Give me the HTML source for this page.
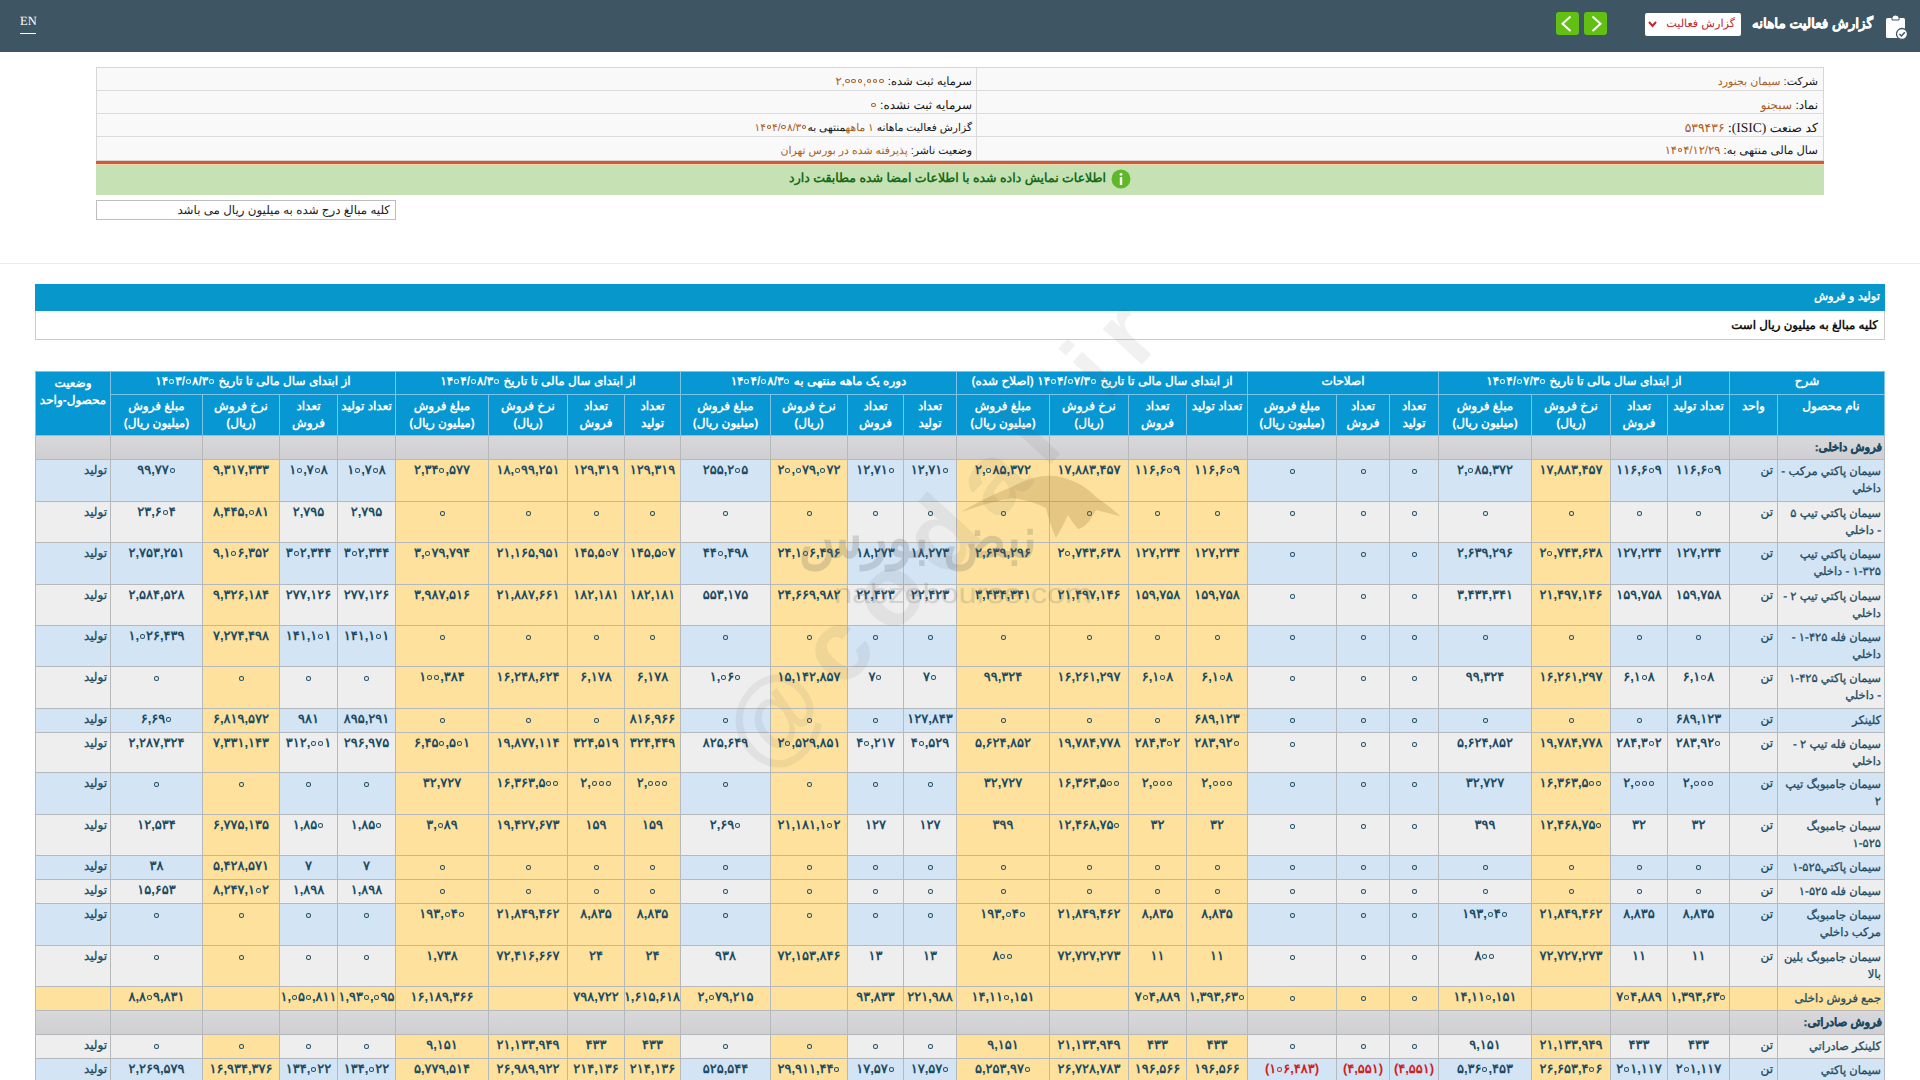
<!DOCTYPE html>
<html lang="fa" dir="ltr"><head><meta charset="utf-8"><title>Codal</title>
<style>
*{box-sizing:border-box}
html,body{text-rendering:geometricPrecision;margin:0;padding:0;width:1920px;height:1080px;overflow:hidden;background:#fff;font-family:"Liberation Sans",sans-serif;position:relative}
.a{position:absolute}
.hdr{position:absolute;left:0;top:0;width:1920px;height:52px;background:#3e5563}
.en{position:absolute;left:20px;top:13px;font-family:"Liberation Serif",serif;font-size:12.5px;color:#fff;line-height:16px}
.enu{position:absolute;left:20px;top:33px;width:16px;height:1px;background:#fff}
.ttl{position:absolute;right:47px;top:14px;font-size:13.6px;-webkit-text-stroke:.35px #fff;font-weight:bold;color:#fff;direction:rtl;white-space:nowrap;line-height:20px}
.dd{position:absolute;left:1645px;top:13px;width:96px;height:23px;background:#fff;border-radius:2px}
.ddt{position:absolute;right:6px;top:2px;font-size:11.2px;color:#c0272d;direction:rtl;white-space:nowrap;line-height:18px}
.gb{position:absolute;top:12px;width:23px;height:23px;background:#62c012;border-radius:3px}
.info{position:absolute;left:96px;top:67px;width:1728px;height:94px;background:#f9f9f9;border:1px solid #d6d6d6}
.il{position:absolute;height:1px;background:#dcdcdc}
.it{position:absolute;margin-top:2px;font-size:12px;color:#151515;direction:rtl;white-space:nowrap;line-height:16px}
.it i{font-style:normal;color:#a95c1c}
.redl{position:absolute;left:96px;top:161px;width:1728px;height:3px;background:#d4573a}
.orl{position:absolute;left:96px;top:164px;width:1728px;height:1px;background:#f1d9a8}
.grn{position:absolute;left:96px;top:165px;width:1728px;height:30px;background:#c6e2b5}
.gtx{position:absolute;right:814px;top:168.5px;font-size:12.5px;font-weight:bold;color:#176c17;direction:rtl;white-space:nowrap;line-height:18px}
.note{position:absolute;left:96px;top:200px;width:300px;height:20px;border:1px solid #bdbdbd;background:#fff}
.ntx{position:absolute;right:5px;top:1px;font-size:11.85px;color:#222;direction:rtl;white-space:nowrap;line-height:16px}
.sep{position:absolute;left:0;top:263px;width:1920px;height:1px;background:#ececec}
.sbar{position:absolute;left:35px;top:284px;width:1850px;height:27px;background:#0797cb}
.stx{position:absolute;right:40px;top:288px;font-size:11.6px;font-weight:bold;color:#fff;direction:rtl;white-space:nowrap;line-height:18px}
.sbox{position:absolute;left:35px;top:311px;width:1850px;height:29px;border:1px solid #cbcbcb;border-top:0;background:#fff}
.sbtx{position:absolute;right:42px;top:316px;font-size:11.8px;font-weight:bold;color:#111;direction:rtl;white-space:nowrap;line-height:18px}
.c{position:absolute;overflow:visible;white-space:nowrap;font-size:12px;line-height:17px;color:#1d4b62;text-align:center;direction:rtl}
.h{background:#0797d3;color:#fff;font-weight:bold;padding-top:3px}
.s{background:linear-gradient(#d9d9db,#cfcfd1)}
.bl{background:#d3e4f5}
.gr{background:#eeeeee}
.yl{background:#fde19c}
.n{padding-top:1px;font-weight:bold;font-size:13px;letter-spacing:.4px}
.z{display:inline-block;width:5px;height:4.6px;border:1.8px solid #1d4b62;border-radius:50%;vertical-align:top;margin-top:8px}
.h1{padding-top:1px}
.nm,.un,.st{-webkit-text-stroke:.3px currentColor}
.nm{text-align:right;padding-right:3px;padding-top:3.5px;font-size:11.5px;line-height:17.4px}
.un{text-align:right;padding-right:4px;padding-top:2px}
.st{text-align:right;padding-right:3px;padding-top:2px}
.s.nm{padding-right:2px}
.s.nm b{color:#1b4a66}
.neg{color:#d0201c}

.ltr{direction:ltr;unicode-bidi:isolate}
.zi{display:inline-block;width:5px;height:4.6px;border:1.8px solid currentColor;border-radius:50%;margin:0 1.2px 0 .8px;vertical-align:1.5px}
.zh{display:inline-block;width:5px;height:4.6px;border:1.8px solid #fff;border-radius:50%;margin:0 1.2px 0 .8px;vertical-align:1.5px}
.zs{display:inline-block;width:4.5px;height:4px;border:1.4px solid currentColor;border-radius:50%;margin:0 1px 0 .6px;vertical-align:2px}

.tb{position:absolute;left:35px;top:371px;width:1850px;height:712px;background:#b6b9bc}
.tbh{position:absolute;left:35px;top:371px;width:1850px;height:65px;background:#7cc3e6}
</style></head><body>
<div class="hdr"></div>
<div class="en">EN</div><div class="enu"></div>
<svg class="a" style="left:1883px;top:13px" width="26" height="28" viewBox="0 0 26 28">
<rect x="3" y="5" width="19" height="20" rx="1.5" fill="#fff"/>
<path d="M9 7 L9 4 Q12.5 0 16 4 L16 7 Z" fill="#fff" stroke="#3e5563" stroke-width="1"/>
<circle cx="19" cy="21" r="5.5" fill="#fff" stroke="#3e5563" stroke-width="1.3"/>
<path d="M16.5 21 L18.5 23 L21.8 19.3" fill="none" stroke="#3e5563" stroke-width="1.5"/>
</svg>
<div class="ttl">گزارش فعالیت ماهانه</div>
<div class="dd"><div class="ddt">گزارش فعالیت</div>
<svg class="a" style="left:3px;top:8px" width="9" height="7" viewBox="0 0 9 7"><path d="M1 1 L4.5 5 L8 1" fill="none" stroke="#c0272d" stroke-width="2"/></svg></div>
<div class="gb" style="left:1556px"><svg width="23" height="23" viewBox="0 0 23 23"><path d="M14.5 4.5 L6.5 11.7 L14.5 19" fill="none" stroke="#fff" stroke-width="2"/></svg></div>
<div class="gb" style="left:1584px"><svg width="23" height="23" viewBox="0 0 23 23"><path d="M8.5 4.5 L16.5 11.7 L8.5 19" fill="none" stroke="#fff" stroke-width="2"/></svg></div>

<div class="info"></div>
<div class="il" style="left:97px;top:90px;width:1726px"></div>
<div class="il" style="left:97px;top:113px;width:1726px"></div>
<div class="il" style="left:97px;top:136px;width:1726px"></div>
<div class="a" style="left:976px;top:68px;width:1px;height:92px;background:#dcdcdc"></div>
<div class="it" style="right:102px;top:72px;font-size:11px">شرکت: <i>سیمان بجنورد</i></div>
<div class="it" style="right:102px;top:95px">نماد: <i>سبجنو</i></div>
<div class="it" style="right:102px;top:118px;font-size:12.4px">کد صنعت <span style="font-family:'Liberation Serif',serif;font-size:13.5px">(ISIC):</span> <i>۵۳۹۴۳۶</i></div>
<div class="it" style="right:102px;top:141px;font-size:11.5px">سال مالی منتهی به: <i><span class="ltr">۱۴<i class="zs"></i>۴/۱۲/۲۹</span></i></div>
<div class="it" style="right:948px;top:72px;font-size:11.5px">سرمایه ثبت شده: <i><span class="ltr">۲,<i class="zs"></i><i class="zs"></i><i class="zs"></i>,<i class="zs"></i><i class="zs"></i><i class="zs"></i></span></i></div>
<div class="it" style="right:948px;top:95px">سرمایه ثبت نشده: <i><i class="zs"></i></i></div>
<div class="it" style="right:948px;top:118px;font-size:10.7px">گزارش فعالیت ماهانه <i>۱ ماهه</i>منتهی به<i><span class="ltr">۱۴<i class="zs"></i>۴/<i class="zs"></i>۸/۳<i class="zs"></i></span></i></div>
<div class="it" style="right:948px;top:141px;font-size:10.9px">وضعیت ناشر: <i>پذیرفته شده در بورس تهران</i></div>
<div class="redl"></div><div class="orl"></div>
<div class="grn"></div>
<svg class="a" style="left:1111px;top:169px" width="20" height="20" viewBox="0 0 20 20"><circle cx="10" cy="10" r="9.5" fill="#5fb82a"/><rect x="8.8" y="8" width="2.4" height="8" fill="#fff"/><circle cx="10" cy="5.3" r="1.4" fill="#fff"/></svg>
<div class="gtx">اطلاعات نمایش داده شده با اطلاعات امضا شده مطابقت دارد</div>
<div class="note"><div class="ntx">کلیه مبالغ درج شده به میلیون ریال می باشد</div></div>
<div class="sep"></div>
<div class="sbar"></div><div class="stx">تولید و فروش</div>
<div class="sbox"></div><div class="sbtx">کلیه مبالغ به میلیون ریال است</div>

<div class="tb"></div><div class="tbh"></div>
<div class="c h h1" style="left:1730px;top:372px;width:154px;height:22px"><span>شرح</span></div>
<div class="c h h1" style="left:1439px;top:372px;width:290px;height:22px"><span>از ابتدای سال مالی تا تاریخ <span class="ltr">۱۴<i class="zh"></i>۴/<i class="zh"></i>۷/۳<i class="zh"></i></span></span></div>
<div class="c h h1" style="left:1248px;top:372px;width:190px;height:22px"><span>اصلاحات</span></div>
<div class="c h h1" style="left:957px;top:372px;width:290px;height:22px"><span>از ابتدای سال مالی تا تاریخ <span class="ltr">۱۴<i class="zh"></i>۴/<i class="zh"></i>۷/۳<i class="zh"></i></span> (اصلاح شده)</span></div>
<div class="c h h1" style="left:681px;top:372px;width:275px;height:22px"><span>دوره یک ماهه منتهی به <span class="ltr">۱۴<i class="zh"></i>۴/<i class="zh"></i>۸/۳<i class="zh"></i></span></span></div>
<div class="c h h1" style="left:396px;top:372px;width:284px;height:22px"><span>از ابتدای سال مالی تا تاریخ <span class="ltr">۱۴<i class="zh"></i>۴/<i class="zh"></i>۸/۳<i class="zh"></i></span></span></div>
<div class="c h h1" style="left:111px;top:372px;width:284px;height:22px"><span>از ابتدای سال مالی تا تاریخ <span class="ltr">۱۴<i class="zh"></i>۳/<i class="zh"></i>۸/۳<i class="zh"></i></span></span></div>
<div class="c h" style="left:36px;top:372px;width:74px;height:63px"><span>وضعیت<br>محصول-واحد</span></div>
<div class="c h" style="left:1778px;top:395px;width:106px;height:40px"><span>نام محصول</span></div>
<div class="c h" style="left:1730px;top:395px;width:47px;height:40px"><span>واحد</span></div>
<div class="c h" style="left:1668px;top:395px;width:61px;height:40px"><span>تعداد تولید</span></div>
<div class="c h" style="left:1611px;top:395px;width:56px;height:40px"><span>تعداد<br>فروش</span></div>
<div class="c h" style="left:1532px;top:395px;width:78px;height:40px"><span>نرخ فروش<br>(ریال)</span></div>
<div class="c h" style="left:1439px;top:395px;width:92px;height:40px"><span>مبلغ فروش<br>(میلیون ریال)</span></div>
<div class="c h" style="left:1390px;top:395px;width:48px;height:40px"><span>تعداد<br>تولید</span></div>
<div class="c h" style="left:1337px;top:395px;width:52px;height:40px"><span>تعداد<br>فروش</span></div>
<div class="c h" style="left:1248px;top:395px;width:88px;height:40px"><span>مبلغ فروش<br>(میلیون ریال)</span></div>
<div class="c h" style="left:1187px;top:395px;width:60px;height:40px"><span>تعداد تولید</span></div>
<div class="c h" style="left:1129px;top:395px;width:57px;height:40px"><span>تعداد<br>فروش</span></div>
<div class="c h" style="left:1050px;top:395px;width:78px;height:40px"><span>نرخ فروش<br>(ریال)</span></div>
<div class="c h" style="left:957px;top:395px;width:92px;height:40px"><span>مبلغ فروش<br>(میلیون ریال)</span></div>
<div class="c h" style="left:904px;top:395px;width:52px;height:40px"><span>تعداد<br>تولید</span></div>
<div class="c h" style="left:848px;top:395px;width:55px;height:40px"><span>تعداد<br>فروش</span></div>
<div class="c h" style="left:771px;top:395px;width:76px;height:40px"><span>نرخ فروش<br>(ریال)</span></div>
<div class="c h" style="left:681px;top:395px;width:89px;height:40px"><span>مبلغ فروش<br>(میلیون ریال)</span></div>
<div class="c h" style="left:625px;top:395px;width:55px;height:40px"><span>تعداد<br>تولید</span></div>
<div class="c h" style="left:568px;top:395px;width:56px;height:40px"><span>تعداد<br>فروش</span></div>
<div class="c h" style="left:489px;top:395px;width:78px;height:40px"><span>نرخ فروش<br>(ریال)</span></div>
<div class="c h" style="left:396px;top:395px;width:92px;height:40px"><span>مبلغ فروش<br>(میلیون ریال)</span></div>
<div class="c h" style="left:338px;top:395px;width:57px;height:40px"><span>تعداد تولید</span></div>
<div class="c h" style="left:280px;top:395px;width:57px;height:40px"><span>تعداد<br>فروش</span></div>
<div class="c h" style="left:203px;top:395px;width:76px;height:40px"><span>نرخ فروش<br>(ریال)</span></div>
<div class="c h" style="left:111px;top:395px;width:91px;height:40px"><span>مبلغ فروش<br>(میلیون ریال)</span></div>
<!--sec1-->
<div class="c s nm" style="left:1778px;top:436px;width:106px;height:23px"><b>فروش داخلی:</b></div>
<div class="c s" style="left:1730px;top:436px;width:47px;height:23px"></div>
<div class="c s" style="left:1668px;top:436px;width:61px;height:23px"></div>
<div class="c s" style="left:1611px;top:436px;width:56px;height:23px"></div>
<div class="c s" style="left:1532px;top:436px;width:78px;height:23px"></div>
<div class="c s" style="left:1439px;top:436px;width:92px;height:23px"></div>
<div class="c s" style="left:1390px;top:436px;width:48px;height:23px"></div>
<div class="c s" style="left:1337px;top:436px;width:52px;height:23px"></div>
<div class="c s" style="left:1248px;top:436px;width:88px;height:23px"></div>
<div class="c s" style="left:1187px;top:436px;width:60px;height:23px"></div>
<div class="c s" style="left:1129px;top:436px;width:57px;height:23px"></div>
<div class="c s" style="left:1050px;top:436px;width:78px;height:23px"></div>
<div class="c s" style="left:957px;top:436px;width:92px;height:23px"></div>
<div class="c s" style="left:904px;top:436px;width:52px;height:23px"></div>
<div class="c s" style="left:848px;top:436px;width:55px;height:23px"></div>
<div class="c s" style="left:771px;top:436px;width:76px;height:23px"></div>
<div class="c s" style="left:681px;top:436px;width:89px;height:23px"></div>
<div class="c s" style="left:625px;top:436px;width:55px;height:23px"></div>
<div class="c s" style="left:568px;top:436px;width:56px;height:23px"></div>
<div class="c s" style="left:489px;top:436px;width:78px;height:23px"></div>
<div class="c s" style="left:396px;top:436px;width:92px;height:23px"></div>
<div class="c s" style="left:338px;top:436px;width:57px;height:23px"></div>
<div class="c s" style="left:280px;top:436px;width:57px;height:23px"></div>
<div class="c s" style="left:203px;top:436px;width:76px;height:23px"></div>
<div class="c s" style="left:111px;top:436px;width:91px;height:23px"></div>
<div class="c s" style="left:36px;top:436px;width:74px;height:23px"></div>
<div class="c bl nm" style="left:1778px;top:460px;width:106px;height:41px">سیمان پاکتي مرکب -<br>داخلي</div>
<div class="c bl un" style="left:1730px;top:460px;width:47px;height:41px">تن</div>
<div class="c bl n" style="left:1668px;top:460px;width:61px;height:41px"><span class="ltr">۱۱۶,۶<i class="zi"></i>۹</span></div>
<div class="c bl n" style="left:1611px;top:460px;width:56px;height:41px"><span class="ltr">۱۱۶,۶<i class="zi"></i>۹</span></div>
<div class="c yl n" style="left:1532px;top:460px;width:78px;height:41px"><span class="ltr">۱۷,۸۸۳,۴۵۷</span></div>
<div class="c bl n" style="left:1439px;top:460px;width:92px;height:41px"><span class="ltr">۲,<i class="zi"></i>۸۵,۳۷۲</span></div>
<div class="c bl n" style="left:1390px;top:460px;width:48px;height:41px"><i class="z"></i></div>
<div class="c bl n" style="left:1337px;top:460px;width:52px;height:41px"><i class="z"></i></div>
<div class="c bl n" style="left:1248px;top:460px;width:88px;height:41px"><i class="z"></i></div>
<div class="c yl n" style="left:1187px;top:460px;width:60px;height:41px"><span class="ltr">۱۱۶,۶<i class="zi"></i>۹</span></div>
<div class="c yl n" style="left:1129px;top:460px;width:57px;height:41px"><span class="ltr">۱۱۶,۶<i class="zi"></i>۹</span></div>
<div class="c yl n" style="left:1050px;top:460px;width:78px;height:41px"><span class="ltr">۱۷,۸۸۳,۴۵۷</span></div>
<div class="c yl n" style="left:957px;top:460px;width:92px;height:41px"><span class="ltr">۲,<i class="zi"></i>۸۵,۳۷۲</span></div>
<div class="c bl n" style="left:904px;top:460px;width:52px;height:41px"><span class="ltr">۱۲,۷۱<i class="zi"></i></span></div>
<div class="c bl n" style="left:848px;top:460px;width:55px;height:41px"><span class="ltr">۱۲,۷۱<i class="zi"></i></span></div>
<div class="c yl n" style="left:771px;top:460px;width:76px;height:41px"><span class="ltr">۲<i class="zi"></i>,<i class="zi"></i>۷۹,<i class="zi"></i>۷۲</span></div>
<div class="c bl n" style="left:681px;top:460px;width:89px;height:41px"><span class="ltr">۲۵۵,۲<i class="zi"></i>۵</span></div>
<div class="c yl n" style="left:625px;top:460px;width:55px;height:41px"><span class="ltr">۱۲۹,۳۱۹</span></div>
<div class="c yl n" style="left:568px;top:460px;width:56px;height:41px"><span class="ltr">۱۲۹,۳۱۹</span></div>
<div class="c yl n" style="left:489px;top:460px;width:78px;height:41px"><span class="ltr">۱۸,<i class="zi"></i>۹۹,۲۵۱</span></div>
<div class="c yl n" style="left:396px;top:460px;width:92px;height:41px"><span class="ltr">۲,۳۴<i class="zi"></i>,۵۷۷</span></div>
<div class="c bl n" style="left:338px;top:460px;width:57px;height:41px"><span class="ltr">۱<i class="zi"></i>,۷<i class="zi"></i>۸</span></div>
<div class="c bl n" style="left:280px;top:460px;width:57px;height:41px"><span class="ltr">۱<i class="zi"></i>,۷<i class="zi"></i>۸</span></div>
<div class="c yl n" style="left:203px;top:460px;width:76px;height:41px"><span class="ltr">۹,۳۱۷,۳۳۳</span></div>
<div class="c bl n" style="left:111px;top:460px;width:91px;height:41px"><span class="ltr">۹۹,۷۷<i class="zi"></i></span></div>
<div class="c bl st" style="left:36px;top:460px;width:74px;height:41px">تولید</div>
<div class="c gr nm" style="left:1778px;top:502px;width:106px;height:40px">سیمان پاکتي تیپ ۵<br>- داخلي</div>
<div class="c gr un" style="left:1730px;top:502px;width:47px;height:40px">تن</div>
<div class="c gr n" style="left:1668px;top:502px;width:61px;height:40px"><i class="z"></i></div>
<div class="c gr n" style="left:1611px;top:502px;width:56px;height:40px"><i class="z"></i></div>
<div class="c yl n" style="left:1532px;top:502px;width:78px;height:40px"><i class="z"></i></div>
<div class="c gr n" style="left:1439px;top:502px;width:92px;height:40px"><i class="z"></i></div>
<div class="c gr n" style="left:1390px;top:502px;width:48px;height:40px"><i class="z"></i></div>
<div class="c gr n" style="left:1337px;top:502px;width:52px;height:40px"><i class="z"></i></div>
<div class="c gr n" style="left:1248px;top:502px;width:88px;height:40px"><i class="z"></i></div>
<div class="c yl n" style="left:1187px;top:502px;width:60px;height:40px"><i class="z"></i></div>
<div class="c yl n" style="left:1129px;top:502px;width:57px;height:40px"><i class="z"></i></div>
<div class="c yl n" style="left:1050px;top:502px;width:78px;height:40px"><i class="z"></i></div>
<div class="c yl n" style="left:957px;top:502px;width:92px;height:40px"><i class="z"></i></div>
<div class="c gr n" style="left:904px;top:502px;width:52px;height:40px"><i class="z"></i></div>
<div class="c gr n" style="left:848px;top:502px;width:55px;height:40px"><i class="z"></i></div>
<div class="c yl n" style="left:771px;top:502px;width:76px;height:40px"><i class="z"></i></div>
<div class="c gr n" style="left:681px;top:502px;width:89px;height:40px"><i class="z"></i></div>
<div class="c yl n" style="left:625px;top:502px;width:55px;height:40px"><i class="z"></i></div>
<div class="c yl n" style="left:568px;top:502px;width:56px;height:40px"><i class="z"></i></div>
<div class="c yl n" style="left:489px;top:502px;width:78px;height:40px"><i class="z"></i></div>
<div class="c yl n" style="left:396px;top:502px;width:92px;height:40px"><i class="z"></i></div>
<div class="c gr n" style="left:338px;top:502px;width:57px;height:40px"><span class="ltr">۲,۷۹۵</span></div>
<div class="c gr n" style="left:280px;top:502px;width:57px;height:40px"><span class="ltr">۲,۷۹۵</span></div>
<div class="c yl n" style="left:203px;top:502px;width:76px;height:40px"><span class="ltr">۸,۴۴۵,<i class="zi"></i>۸۱</span></div>
<div class="c gr n" style="left:111px;top:502px;width:91px;height:40px"><span class="ltr">۲۳,۶<i class="zi"></i>۴</span></div>
<div class="c gr st" style="left:36px;top:502px;width:74px;height:40px">تولید</div>
<div class="c bl nm" style="left:1778px;top:543px;width:106px;height:41px">سیمان پاکتي تیپ<br>۱-۳۲۵ - داخلي</div>
<div class="c bl un" style="left:1730px;top:543px;width:47px;height:41px">تن</div>
<div class="c bl n" style="left:1668px;top:543px;width:61px;height:41px"><span class="ltr">۱۲۷,۲۳۴</span></div>
<div class="c bl n" style="left:1611px;top:543px;width:56px;height:41px"><span class="ltr">۱۲۷,۲۳۴</span></div>
<div class="c yl n" style="left:1532px;top:543px;width:78px;height:41px"><span class="ltr">۲<i class="zi"></i>,۷۴۳,۶۳۸</span></div>
<div class="c bl n" style="left:1439px;top:543px;width:92px;height:41px"><span class="ltr">۲,۶۳۹,۲۹۶</span></div>
<div class="c bl n" style="left:1390px;top:543px;width:48px;height:41px"><i class="z"></i></div>
<div class="c bl n" style="left:1337px;top:543px;width:52px;height:41px"><i class="z"></i></div>
<div class="c bl n" style="left:1248px;top:543px;width:88px;height:41px"><i class="z"></i></div>
<div class="c yl n" style="left:1187px;top:543px;width:60px;height:41px"><span class="ltr">۱۲۷,۲۳۴</span></div>
<div class="c yl n" style="left:1129px;top:543px;width:57px;height:41px"><span class="ltr">۱۲۷,۲۳۴</span></div>
<div class="c yl n" style="left:1050px;top:543px;width:78px;height:41px"><span class="ltr">۲<i class="zi"></i>,۷۴۳,۶۳۸</span></div>
<div class="c yl n" style="left:957px;top:543px;width:92px;height:41px"><span class="ltr">۲,۶۳۹,۲۹۶</span></div>
<div class="c bl n" style="left:904px;top:543px;width:52px;height:41px"><span class="ltr">۱۸,۲۷۳</span></div>
<div class="c bl n" style="left:848px;top:543px;width:55px;height:41px"><span class="ltr">۱۸,۲۷۳</span></div>
<div class="c yl n" style="left:771px;top:543px;width:76px;height:41px"><span class="ltr">۲۴,۱<i class="zi"></i>۶,۴۹۶</span></div>
<div class="c bl n" style="left:681px;top:543px;width:89px;height:41px"><span class="ltr">۴۴<i class="zi"></i>,۴۹۸</span></div>
<div class="c yl n" style="left:625px;top:543px;width:55px;height:41px"><span class="ltr">۱۴۵,۵<i class="zi"></i>۷</span></div>
<div class="c yl n" style="left:568px;top:543px;width:56px;height:41px"><span class="ltr">۱۴۵,۵<i class="zi"></i>۷</span></div>
<div class="c yl n" style="left:489px;top:543px;width:78px;height:41px"><span class="ltr">۲۱,۱۶۵,۹۵۱</span></div>
<div class="c yl n" style="left:396px;top:543px;width:92px;height:41px"><span class="ltr">۳,<i class="zi"></i>۷۹,۷۹۴</span></div>
<div class="c bl n" style="left:338px;top:543px;width:57px;height:41px"><span class="ltr">۳<i class="zi"></i>۲,۳۴۴</span></div>
<div class="c bl n" style="left:280px;top:543px;width:57px;height:41px"><span class="ltr">۳<i class="zi"></i>۲,۳۴۴</span></div>
<div class="c yl n" style="left:203px;top:543px;width:76px;height:41px"><span class="ltr">۹,۱<i class="zi"></i>۶,۳۵۲</span></div>
<div class="c bl n" style="left:111px;top:543px;width:91px;height:41px"><span class="ltr">۲,۷۵۳,۲۵۱</span></div>
<div class="c bl st" style="left:36px;top:543px;width:74px;height:41px">تولید</div>
<div class="c gr nm" style="left:1778px;top:585px;width:106px;height:40px">سیمان پاکتي تیپ ۲ -<br>داخلي</div>
<div class="c gr un" style="left:1730px;top:585px;width:47px;height:40px">تن</div>
<div class="c gr n" style="left:1668px;top:585px;width:61px;height:40px"><span class="ltr">۱۵۹,۷۵۸</span></div>
<div class="c gr n" style="left:1611px;top:585px;width:56px;height:40px"><span class="ltr">۱۵۹,۷۵۸</span></div>
<div class="c yl n" style="left:1532px;top:585px;width:78px;height:40px"><span class="ltr">۲۱,۴۹۷,۱۴۶</span></div>
<div class="c gr n" style="left:1439px;top:585px;width:92px;height:40px"><span class="ltr">۳,۴۳۴,۳۴۱</span></div>
<div class="c gr n" style="left:1390px;top:585px;width:48px;height:40px"><i class="z"></i></div>
<div class="c gr n" style="left:1337px;top:585px;width:52px;height:40px"><i class="z"></i></div>
<div class="c gr n" style="left:1248px;top:585px;width:88px;height:40px"><i class="z"></i></div>
<div class="c yl n" style="left:1187px;top:585px;width:60px;height:40px"><span class="ltr">۱۵۹,۷۵۸</span></div>
<div class="c yl n" style="left:1129px;top:585px;width:57px;height:40px"><span class="ltr">۱۵۹,۷۵۸</span></div>
<div class="c yl n" style="left:1050px;top:585px;width:78px;height:40px"><span class="ltr">۲۱,۴۹۷,۱۴۶</span></div>
<div class="c yl n" style="left:957px;top:585px;width:92px;height:40px"><span class="ltr">۳,۴۳۴,۳۴۱</span></div>
<div class="c gr n" style="left:904px;top:585px;width:52px;height:40px"><span class="ltr">۲۲,۴۲۳</span></div>
<div class="c gr n" style="left:848px;top:585px;width:55px;height:40px"><span class="ltr">۲۲,۴۲۳</span></div>
<div class="c yl n" style="left:771px;top:585px;width:76px;height:40px"><span class="ltr">۲۴,۶۶۹,۹۸۲</span></div>
<div class="c gr n" style="left:681px;top:585px;width:89px;height:40px"><span class="ltr">۵۵۳,۱۷۵</span></div>
<div class="c yl n" style="left:625px;top:585px;width:55px;height:40px"><span class="ltr">۱۸۲,۱۸۱</span></div>
<div class="c yl n" style="left:568px;top:585px;width:56px;height:40px"><span class="ltr">۱۸۲,۱۸۱</span></div>
<div class="c yl n" style="left:489px;top:585px;width:78px;height:40px"><span class="ltr">۲۱,۸۸۷,۶۶۱</span></div>
<div class="c yl n" style="left:396px;top:585px;width:92px;height:40px"><span class="ltr">۳,۹۸۷,۵۱۶</span></div>
<div class="c gr n" style="left:338px;top:585px;width:57px;height:40px"><span class="ltr">۲۷۷,۱۲۶</span></div>
<div class="c gr n" style="left:280px;top:585px;width:57px;height:40px"><span class="ltr">۲۷۷,۱۲۶</span></div>
<div class="c yl n" style="left:203px;top:585px;width:76px;height:40px"><span class="ltr">۹,۳۲۶,۱۸۴</span></div>
<div class="c gr n" style="left:111px;top:585px;width:91px;height:40px"><span class="ltr">۲,۵۸۴,۵۲۸</span></div>
<div class="c gr st" style="left:36px;top:585px;width:74px;height:40px">تولید</div>
<div class="c bl nm" style="left:1778px;top:626px;width:106px;height:40px">سیمان فله ۴۲۵-۱ -<br>داخلي</div>
<div class="c bl un" style="left:1730px;top:626px;width:47px;height:40px">تن</div>
<div class="c bl n" style="left:1668px;top:626px;width:61px;height:40px"><i class="z"></i></div>
<div class="c bl n" style="left:1611px;top:626px;width:56px;height:40px"><i class="z"></i></div>
<div class="c yl n" style="left:1532px;top:626px;width:78px;height:40px"><i class="z"></i></div>
<div class="c bl n" style="left:1439px;top:626px;width:92px;height:40px"><i class="z"></i></div>
<div class="c bl n" style="left:1390px;top:626px;width:48px;height:40px"><i class="z"></i></div>
<div class="c bl n" style="left:1337px;top:626px;width:52px;height:40px"><i class="z"></i></div>
<div class="c bl n" style="left:1248px;top:626px;width:88px;height:40px"><i class="z"></i></div>
<div class="c yl n" style="left:1187px;top:626px;width:60px;height:40px"><i class="z"></i></div>
<div class="c yl n" style="left:1129px;top:626px;width:57px;height:40px"><i class="z"></i></div>
<div class="c yl n" style="left:1050px;top:626px;width:78px;height:40px"><i class="z"></i></div>
<div class="c yl n" style="left:957px;top:626px;width:92px;height:40px"><i class="z"></i></div>
<div class="c bl n" style="left:904px;top:626px;width:52px;height:40px"><i class="z"></i></div>
<div class="c bl n" style="left:848px;top:626px;width:55px;height:40px"><i class="z"></i></div>
<div class="c yl n" style="left:771px;top:626px;width:76px;height:40px"><i class="z"></i></div>
<div class="c bl n" style="left:681px;top:626px;width:89px;height:40px"><i class="z"></i></div>
<div class="c yl n" style="left:625px;top:626px;width:55px;height:40px"><i class="z"></i></div>
<div class="c yl n" style="left:568px;top:626px;width:56px;height:40px"><i class="z"></i></div>
<div class="c yl n" style="left:489px;top:626px;width:78px;height:40px"><i class="z"></i></div>
<div class="c yl n" style="left:396px;top:626px;width:92px;height:40px"><i class="z"></i></div>
<div class="c bl n" style="left:338px;top:626px;width:57px;height:40px"><span class="ltr">۱۴۱,۱<i class="zi"></i>۱</span></div>
<div class="c bl n" style="left:280px;top:626px;width:57px;height:40px"><span class="ltr">۱۴۱,۱<i class="zi"></i>۱</span></div>
<div class="c yl n" style="left:203px;top:626px;width:76px;height:40px"><span class="ltr">۷,۲۷۴,۴۹۸</span></div>
<div class="c bl n" style="left:111px;top:626px;width:91px;height:40px"><span class="ltr">۱,<i class="zi"></i>۲۶,۴۳۹</span></div>
<div class="c bl st" style="left:36px;top:626px;width:74px;height:40px">تولید</div>
<div class="c gr nm" style="left:1778px;top:667px;width:106px;height:41px">سیمان پاکتي ۴۲۵-۱<br>- داخلي</div>
<div class="c gr un" style="left:1730px;top:667px;width:47px;height:41px">تن</div>
<div class="c gr n" style="left:1668px;top:667px;width:61px;height:41px"><span class="ltr">۶,۱<i class="zi"></i>۸</span></div>
<div class="c gr n" style="left:1611px;top:667px;width:56px;height:41px"><span class="ltr">۶,۱<i class="zi"></i>۸</span></div>
<div class="c yl n" style="left:1532px;top:667px;width:78px;height:41px"><span class="ltr">۱۶,۲۶۱,۲۹۷</span></div>
<div class="c gr n" style="left:1439px;top:667px;width:92px;height:41px"><span class="ltr">۹۹,۳۲۴</span></div>
<div class="c gr n" style="left:1390px;top:667px;width:48px;height:41px"><i class="z"></i></div>
<div class="c gr n" style="left:1337px;top:667px;width:52px;height:41px"><i class="z"></i></div>
<div class="c gr n" style="left:1248px;top:667px;width:88px;height:41px"><i class="z"></i></div>
<div class="c yl n" style="left:1187px;top:667px;width:60px;height:41px"><span class="ltr">۶,۱<i class="zi"></i>۸</span></div>
<div class="c yl n" style="left:1129px;top:667px;width:57px;height:41px"><span class="ltr">۶,۱<i class="zi"></i>۸</span></div>
<div class="c yl n" style="left:1050px;top:667px;width:78px;height:41px"><span class="ltr">۱۶,۲۶۱,۲۹۷</span></div>
<div class="c yl n" style="left:957px;top:667px;width:92px;height:41px"><span class="ltr">۹۹,۳۲۴</span></div>
<div class="c gr n" style="left:904px;top:667px;width:52px;height:41px"><span class="ltr">۷<i class="zi"></i></span></div>
<div class="c gr n" style="left:848px;top:667px;width:55px;height:41px"><span class="ltr">۷<i class="zi"></i></span></div>
<div class="c yl n" style="left:771px;top:667px;width:76px;height:41px"><span class="ltr">۱۵,۱۴۲,۸۵۷</span></div>
<div class="c gr n" style="left:681px;top:667px;width:89px;height:41px"><span class="ltr">۱,<i class="zi"></i>۶<i class="zi"></i></span></div>
<div class="c yl n" style="left:625px;top:667px;width:55px;height:41px"><span class="ltr">۶,۱۷۸</span></div>
<div class="c yl n" style="left:568px;top:667px;width:56px;height:41px"><span class="ltr">۶,۱۷۸</span></div>
<div class="c yl n" style="left:489px;top:667px;width:78px;height:41px"><span class="ltr">۱۶,۲۴۸,۶۲۴</span></div>
<div class="c yl n" style="left:396px;top:667px;width:92px;height:41px"><span class="ltr">۱<i class="zi"></i><i class="zi"></i>,۳۸۴</span></div>
<div class="c gr n" style="left:338px;top:667px;width:57px;height:41px"><i class="z"></i></div>
<div class="c gr n" style="left:280px;top:667px;width:57px;height:41px"><i class="z"></i></div>
<div class="c yl n" style="left:203px;top:667px;width:76px;height:41px"><i class="z"></i></div>
<div class="c gr n" style="left:111px;top:667px;width:91px;height:41px"><i class="z"></i></div>
<div class="c gr st" style="left:36px;top:667px;width:74px;height:41px">تولید</div>
<div class="c bl nm" style="left:1778px;top:709px;width:106px;height:23px">کلینکر</div>
<div class="c bl un" style="left:1730px;top:709px;width:47px;height:23px">تن</div>
<div class="c bl n" style="left:1668px;top:709px;width:61px;height:23px"><span class="ltr">۶۸۹,۱۲۳</span></div>
<div class="c bl n" style="left:1611px;top:709px;width:56px;height:23px"><i class="z"></i></div>
<div class="c yl n" style="left:1532px;top:709px;width:78px;height:23px"><i class="z"></i></div>
<div class="c bl n" style="left:1439px;top:709px;width:92px;height:23px"><i class="z"></i></div>
<div class="c bl n" style="left:1390px;top:709px;width:48px;height:23px"><i class="z"></i></div>
<div class="c bl n" style="left:1337px;top:709px;width:52px;height:23px"><i class="z"></i></div>
<div class="c bl n" style="left:1248px;top:709px;width:88px;height:23px"><i class="z"></i></div>
<div class="c yl n" style="left:1187px;top:709px;width:60px;height:23px"><span class="ltr">۶۸۹,۱۲۳</span></div>
<div class="c yl n" style="left:1129px;top:709px;width:57px;height:23px"><i class="z"></i></div>
<div class="c yl n" style="left:1050px;top:709px;width:78px;height:23px"><i class="z"></i></div>
<div class="c yl n" style="left:957px;top:709px;width:92px;height:23px"><i class="z"></i></div>
<div class="c bl n" style="left:904px;top:709px;width:52px;height:23px"><span class="ltr">۱۲۷,۸۴۳</span></div>
<div class="c bl n" style="left:848px;top:709px;width:55px;height:23px"><i class="z"></i></div>
<div class="c yl n" style="left:771px;top:709px;width:76px;height:23px"><i class="z"></i></div>
<div class="c bl n" style="left:681px;top:709px;width:89px;height:23px"><i class="z"></i></div>
<div class="c yl n" style="left:625px;top:709px;width:55px;height:23px"><span class="ltr">۸۱۶,۹۶۶</span></div>
<div class="c yl n" style="left:568px;top:709px;width:56px;height:23px"><i class="z"></i></div>
<div class="c yl n" style="left:489px;top:709px;width:78px;height:23px"><i class="z"></i></div>
<div class="c yl n" style="left:396px;top:709px;width:92px;height:23px"><i class="z"></i></div>
<div class="c bl n" style="left:338px;top:709px;width:57px;height:23px"><span class="ltr">۸۹۵,۲۹۱</span></div>
<div class="c bl n" style="left:280px;top:709px;width:57px;height:23px"><span class="ltr">۹۸۱</span></div>
<div class="c yl n" style="left:203px;top:709px;width:76px;height:23px"><span class="ltr">۶,۸۱۹,۵۷۲</span></div>
<div class="c bl n" style="left:111px;top:709px;width:91px;height:23px"><span class="ltr">۶,۶۹<i class="zi"></i></span></div>
<div class="c bl st" style="left:36px;top:709px;width:74px;height:23px">تولید</div>
<div class="c gr nm" style="left:1778px;top:733px;width:106px;height:39px">سیمان فله تیپ ۲ -<br>داخلي</div>
<div class="c gr un" style="left:1730px;top:733px;width:47px;height:39px">تن</div>
<div class="c gr n" style="left:1668px;top:733px;width:61px;height:39px"><span class="ltr">۲۸۳,۹۲<i class="zi"></i></span></div>
<div class="c gr n" style="left:1611px;top:733px;width:56px;height:39px"><span class="ltr">۲۸۴,۳<i class="zi"></i>۲</span></div>
<div class="c yl n" style="left:1532px;top:733px;width:78px;height:39px"><span class="ltr">۱۹,۷۸۴,۷۷۸</span></div>
<div class="c gr n" style="left:1439px;top:733px;width:92px;height:39px"><span class="ltr">۵,۶۲۴,۸۵۲</span></div>
<div class="c gr n" style="left:1390px;top:733px;width:48px;height:39px"><i class="z"></i></div>
<div class="c gr n" style="left:1337px;top:733px;width:52px;height:39px"><i class="z"></i></div>
<div class="c gr n" style="left:1248px;top:733px;width:88px;height:39px"><i class="z"></i></div>
<div class="c yl n" style="left:1187px;top:733px;width:60px;height:39px"><span class="ltr">۲۸۳,۹۲<i class="zi"></i></span></div>
<div class="c yl n" style="left:1129px;top:733px;width:57px;height:39px"><span class="ltr">۲۸۴,۳<i class="zi"></i>۲</span></div>
<div class="c yl n" style="left:1050px;top:733px;width:78px;height:39px"><span class="ltr">۱۹,۷۸۴,۷۷۸</span></div>
<div class="c yl n" style="left:957px;top:733px;width:92px;height:39px"><span class="ltr">۵,۶۲۴,۸۵۲</span></div>
<div class="c gr n" style="left:904px;top:733px;width:52px;height:39px"><span class="ltr">۴<i class="zi"></i>,۵۲۹</span></div>
<div class="c gr n" style="left:848px;top:733px;width:55px;height:39px"><span class="ltr">۴<i class="zi"></i>,۲۱۷</span></div>
<div class="c yl n" style="left:771px;top:733px;width:76px;height:39px"><span class="ltr">۲<i class="zi"></i>,۵۲۹,۸۵۱</span></div>
<div class="c gr n" style="left:681px;top:733px;width:89px;height:39px"><span class="ltr">۸۲۵,۶۴۹</span></div>
<div class="c yl n" style="left:625px;top:733px;width:55px;height:39px"><span class="ltr">۳۲۴,۴۴۹</span></div>
<div class="c yl n" style="left:568px;top:733px;width:56px;height:39px"><span class="ltr">۳۲۴,۵۱۹</span></div>
<div class="c yl n" style="left:489px;top:733px;width:78px;height:39px"><span class="ltr">۱۹,۸۷۷,۱۱۴</span></div>
<div class="c yl n" style="left:396px;top:733px;width:92px;height:39px"><span class="ltr">۶,۴۵<i class="zi"></i>,۵<i class="zi"></i>۱</span></div>
<div class="c gr n" style="left:338px;top:733px;width:57px;height:39px"><span class="ltr">۲۹۶,۹۷۵</span></div>
<div class="c gr n" style="left:280px;top:733px;width:57px;height:39px"><span class="ltr">۳۱۲,<i class="zi"></i><i class="zi"></i>۱</span></div>
<div class="c yl n" style="left:203px;top:733px;width:76px;height:39px"><span class="ltr">۷,۳۳۱,۱۴۳</span></div>
<div class="c gr n" style="left:111px;top:733px;width:91px;height:39px"><span class="ltr">۲,۲۸۷,۳۲۴</span></div>
<div class="c gr st" style="left:36px;top:733px;width:74px;height:39px">تولید</div>
<div class="c bl nm" style="left:1778px;top:773px;width:106px;height:41px">سیمان جامبوبگ تیپ<br>۲</div>
<div class="c bl un" style="left:1730px;top:773px;width:47px;height:41px">تن</div>
<div class="c bl n" style="left:1668px;top:773px;width:61px;height:41px"><span class="ltr">۲,<i class="zi"></i><i class="zi"></i><i class="zi"></i></span></div>
<div class="c bl n" style="left:1611px;top:773px;width:56px;height:41px"><span class="ltr">۲,<i class="zi"></i><i class="zi"></i><i class="zi"></i></span></div>
<div class="c yl n" style="left:1532px;top:773px;width:78px;height:41px"><span class="ltr">۱۶,۳۶۳,۵<i class="zi"></i><i class="zi"></i></span></div>
<div class="c bl n" style="left:1439px;top:773px;width:92px;height:41px"><span class="ltr">۳۲,۷۲۷</span></div>
<div class="c bl n" style="left:1390px;top:773px;width:48px;height:41px"><i class="z"></i></div>
<div class="c bl n" style="left:1337px;top:773px;width:52px;height:41px"><i class="z"></i></div>
<div class="c bl n" style="left:1248px;top:773px;width:88px;height:41px"><i class="z"></i></div>
<div class="c yl n" style="left:1187px;top:773px;width:60px;height:41px"><span class="ltr">۲,<i class="zi"></i><i class="zi"></i><i class="zi"></i></span></div>
<div class="c yl n" style="left:1129px;top:773px;width:57px;height:41px"><span class="ltr">۲,<i class="zi"></i><i class="zi"></i><i class="zi"></i></span></div>
<div class="c yl n" style="left:1050px;top:773px;width:78px;height:41px"><span class="ltr">۱۶,۳۶۳,۵<i class="zi"></i><i class="zi"></i></span></div>
<div class="c yl n" style="left:957px;top:773px;width:92px;height:41px"><span class="ltr">۳۲,۷۲۷</span></div>
<div class="c bl n" style="left:904px;top:773px;width:52px;height:41px"><i class="z"></i></div>
<div class="c bl n" style="left:848px;top:773px;width:55px;height:41px"><i class="z"></i></div>
<div class="c yl n" style="left:771px;top:773px;width:76px;height:41px"><i class="z"></i></div>
<div class="c bl n" style="left:681px;top:773px;width:89px;height:41px"><i class="z"></i></div>
<div class="c yl n" style="left:625px;top:773px;width:55px;height:41px"><span class="ltr">۲,<i class="zi"></i><i class="zi"></i><i class="zi"></i></span></div>
<div class="c yl n" style="left:568px;top:773px;width:56px;height:41px"><span class="ltr">۲,<i class="zi"></i><i class="zi"></i><i class="zi"></i></span></div>
<div class="c yl n" style="left:489px;top:773px;width:78px;height:41px"><span class="ltr">۱۶,۳۶۳,۵<i class="zi"></i><i class="zi"></i></span></div>
<div class="c yl n" style="left:396px;top:773px;width:92px;height:41px"><span class="ltr">۳۲,۷۲۷</span></div>
<div class="c bl n" style="left:338px;top:773px;width:57px;height:41px"><i class="z"></i></div>
<div class="c bl n" style="left:280px;top:773px;width:57px;height:41px"><i class="z"></i></div>
<div class="c yl n" style="left:203px;top:773px;width:76px;height:41px"><i class="z"></i></div>
<div class="c bl n" style="left:111px;top:773px;width:91px;height:41px"><i class="z"></i></div>
<div class="c bl st" style="left:36px;top:773px;width:74px;height:41px">تولید</div>
<div class="c gr nm" style="left:1778px;top:815px;width:106px;height:40px">سیمان جامبوبگ<br>۱-۵۲۵</div>
<div class="c gr un" style="left:1730px;top:815px;width:47px;height:40px">تن</div>
<div class="c gr n" style="left:1668px;top:815px;width:61px;height:40px"><span class="ltr">۳۲</span></div>
<div class="c gr n" style="left:1611px;top:815px;width:56px;height:40px"><span class="ltr">۳۲</span></div>
<div class="c yl n" style="left:1532px;top:815px;width:78px;height:40px"><span class="ltr">۱۲,۴۶۸,۷۵<i class="zi"></i></span></div>
<div class="c gr n" style="left:1439px;top:815px;width:92px;height:40px"><span class="ltr">۳۹۹</span></div>
<div class="c gr n" style="left:1390px;top:815px;width:48px;height:40px"><i class="z"></i></div>
<div class="c gr n" style="left:1337px;top:815px;width:52px;height:40px"><i class="z"></i></div>
<div class="c gr n" style="left:1248px;top:815px;width:88px;height:40px"><i class="z"></i></div>
<div class="c yl n" style="left:1187px;top:815px;width:60px;height:40px"><span class="ltr">۳۲</span></div>
<div class="c yl n" style="left:1129px;top:815px;width:57px;height:40px"><span class="ltr">۳۲</span></div>
<div class="c yl n" style="left:1050px;top:815px;width:78px;height:40px"><span class="ltr">۱۲,۴۶۸,۷۵<i class="zi"></i></span></div>
<div class="c yl n" style="left:957px;top:815px;width:92px;height:40px"><span class="ltr">۳۹۹</span></div>
<div class="c gr n" style="left:904px;top:815px;width:52px;height:40px"><span class="ltr">۱۲۷</span></div>
<div class="c gr n" style="left:848px;top:815px;width:55px;height:40px"><span class="ltr">۱۲۷</span></div>
<div class="c yl n" style="left:771px;top:815px;width:76px;height:40px"><span class="ltr">۲۱,۱۸۱,۱<i class="zi"></i>۲</span></div>
<div class="c gr n" style="left:681px;top:815px;width:89px;height:40px"><span class="ltr">۲,۶۹<i class="zi"></i></span></div>
<div class="c yl n" style="left:625px;top:815px;width:55px;height:40px"><span class="ltr">۱۵۹</span></div>
<div class="c yl n" style="left:568px;top:815px;width:56px;height:40px"><span class="ltr">۱۵۹</span></div>
<div class="c yl n" style="left:489px;top:815px;width:78px;height:40px"><span class="ltr">۱۹,۴۲۷,۶۷۳</span></div>
<div class="c yl n" style="left:396px;top:815px;width:92px;height:40px"><span class="ltr">۳,<i class="zi"></i>۸۹</span></div>
<div class="c gr n" style="left:338px;top:815px;width:57px;height:40px"><span class="ltr">۱,۸۵<i class="zi"></i></span></div>
<div class="c gr n" style="left:280px;top:815px;width:57px;height:40px"><span class="ltr">۱,۸۵<i class="zi"></i></span></div>
<div class="c yl n" style="left:203px;top:815px;width:76px;height:40px"><span class="ltr">۶,۷۷۵,۱۳۵</span></div>
<div class="c gr n" style="left:111px;top:815px;width:91px;height:40px"><span class="ltr">۱۲,۵۳۴</span></div>
<div class="c gr st" style="left:36px;top:815px;width:74px;height:40px">تولید</div>
<div class="c bl nm" style="left:1778px;top:856px;width:106px;height:23px">سیمان پاکتي۵۲۵-۱</div>
<div class="c bl un" style="left:1730px;top:856px;width:47px;height:23px">تن</div>
<div class="c bl n" style="left:1668px;top:856px;width:61px;height:23px"><i class="z"></i></div>
<div class="c bl n" style="left:1611px;top:856px;width:56px;height:23px"><i class="z"></i></div>
<div class="c yl n" style="left:1532px;top:856px;width:78px;height:23px"><i class="z"></i></div>
<div class="c bl n" style="left:1439px;top:856px;width:92px;height:23px"><i class="z"></i></div>
<div class="c bl n" style="left:1390px;top:856px;width:48px;height:23px"><i class="z"></i></div>
<div class="c bl n" style="left:1337px;top:856px;width:52px;height:23px"><i class="z"></i></div>
<div class="c bl n" style="left:1248px;top:856px;width:88px;height:23px"><i class="z"></i></div>
<div class="c yl n" style="left:1187px;top:856px;width:60px;height:23px"><i class="z"></i></div>
<div class="c yl n" style="left:1129px;top:856px;width:57px;height:23px"><i class="z"></i></div>
<div class="c yl n" style="left:1050px;top:856px;width:78px;height:23px"><i class="z"></i></div>
<div class="c yl n" style="left:957px;top:856px;width:92px;height:23px"><i class="z"></i></div>
<div class="c bl n" style="left:904px;top:856px;width:52px;height:23px"><i class="z"></i></div>
<div class="c bl n" style="left:848px;top:856px;width:55px;height:23px"><i class="z"></i></div>
<div class="c yl n" style="left:771px;top:856px;width:76px;height:23px"><i class="z"></i></div>
<div class="c bl n" style="left:681px;top:856px;width:89px;height:23px"><i class="z"></i></div>
<div class="c yl n" style="left:625px;top:856px;width:55px;height:23px"><i class="z"></i></div>
<div class="c yl n" style="left:568px;top:856px;width:56px;height:23px"><i class="z"></i></div>
<div class="c yl n" style="left:489px;top:856px;width:78px;height:23px"><i class="z"></i></div>
<div class="c yl n" style="left:396px;top:856px;width:92px;height:23px"><i class="z"></i></div>
<div class="c bl n" style="left:338px;top:856px;width:57px;height:23px"><span class="ltr">۷</span></div>
<div class="c bl n" style="left:280px;top:856px;width:57px;height:23px"><span class="ltr">۷</span></div>
<div class="c yl n" style="left:203px;top:856px;width:76px;height:23px"><span class="ltr">۵,۴۲۸,۵۷۱</span></div>
<div class="c bl n" style="left:111px;top:856px;width:91px;height:23px"><span class="ltr">۳۸</span></div>
<div class="c bl st" style="left:36px;top:856px;width:74px;height:23px">تولید</div>
<div class="c gr nm" style="left:1778px;top:880px;width:106px;height:23px">سیمان فله ۵۲۵-۱</div>
<div class="c gr un" style="left:1730px;top:880px;width:47px;height:23px">تن</div>
<div class="c gr n" style="left:1668px;top:880px;width:61px;height:23px"><i class="z"></i></div>
<div class="c gr n" style="left:1611px;top:880px;width:56px;height:23px"><i class="z"></i></div>
<div class="c yl n" style="left:1532px;top:880px;width:78px;height:23px"><i class="z"></i></div>
<div class="c gr n" style="left:1439px;top:880px;width:92px;height:23px"><i class="z"></i></div>
<div class="c gr n" style="left:1390px;top:880px;width:48px;height:23px"><i class="z"></i></div>
<div class="c gr n" style="left:1337px;top:880px;width:52px;height:23px"><i class="z"></i></div>
<div class="c gr n" style="left:1248px;top:880px;width:88px;height:23px"><i class="z"></i></div>
<div class="c yl n" style="left:1187px;top:880px;width:60px;height:23px"><i class="z"></i></div>
<div class="c yl n" style="left:1129px;top:880px;width:57px;height:23px"><i class="z"></i></div>
<div class="c yl n" style="left:1050px;top:880px;width:78px;height:23px"><i class="z"></i></div>
<div class="c yl n" style="left:957px;top:880px;width:92px;height:23px"><i class="z"></i></div>
<div class="c gr n" style="left:904px;top:880px;width:52px;height:23px"><i class="z"></i></div>
<div class="c gr n" style="left:848px;top:880px;width:55px;height:23px"><i class="z"></i></div>
<div class="c yl n" style="left:771px;top:880px;width:76px;height:23px"><i class="z"></i></div>
<div class="c gr n" style="left:681px;top:880px;width:89px;height:23px"><i class="z"></i></div>
<div class="c yl n" style="left:625px;top:880px;width:55px;height:23px"><i class="z"></i></div>
<div class="c yl n" style="left:568px;top:880px;width:56px;height:23px"><i class="z"></i></div>
<div class="c yl n" style="left:489px;top:880px;width:78px;height:23px"><i class="z"></i></div>
<div class="c yl n" style="left:396px;top:880px;width:92px;height:23px"><i class="z"></i></div>
<div class="c gr n" style="left:338px;top:880px;width:57px;height:23px"><span class="ltr">۱,۸۹۸</span></div>
<div class="c gr n" style="left:280px;top:880px;width:57px;height:23px"><span class="ltr">۱,۸۹۸</span></div>
<div class="c yl n" style="left:203px;top:880px;width:76px;height:23px"><span class="ltr">۸,۲۴۷,۱<i class="zi"></i>۲</span></div>
<div class="c gr n" style="left:111px;top:880px;width:91px;height:23px"><span class="ltr">۱۵,۶۵۳</span></div>
<div class="c gr st" style="left:36px;top:880px;width:74px;height:23px">تولید</div>
<div class="c bl nm" style="left:1778px;top:904px;width:106px;height:41px">سیمان جامبوبگ<br>مرکب داخلي</div>
<div class="c bl un" style="left:1730px;top:904px;width:47px;height:41px">تن</div>
<div class="c bl n" style="left:1668px;top:904px;width:61px;height:41px"><span class="ltr">۸,۸۳۵</span></div>
<div class="c bl n" style="left:1611px;top:904px;width:56px;height:41px"><span class="ltr">۸,۸۳۵</span></div>
<div class="c yl n" style="left:1532px;top:904px;width:78px;height:41px"><span class="ltr">۲۱,۸۴۹,۴۶۲</span></div>
<div class="c bl n" style="left:1439px;top:904px;width:92px;height:41px"><span class="ltr">۱۹۳,<i class="zi"></i>۴<i class="zi"></i></span></div>
<div class="c bl n" style="left:1390px;top:904px;width:48px;height:41px"><i class="z"></i></div>
<div class="c bl n" style="left:1337px;top:904px;width:52px;height:41px"><i class="z"></i></div>
<div class="c bl n" style="left:1248px;top:904px;width:88px;height:41px"><i class="z"></i></div>
<div class="c yl n" style="left:1187px;top:904px;width:60px;height:41px"><span class="ltr">۸,۸۳۵</span></div>
<div class="c yl n" style="left:1129px;top:904px;width:57px;height:41px"><span class="ltr">۸,۸۳۵</span></div>
<div class="c yl n" style="left:1050px;top:904px;width:78px;height:41px"><span class="ltr">۲۱,۸۴۹,۴۶۲</span></div>
<div class="c yl n" style="left:957px;top:904px;width:92px;height:41px"><span class="ltr">۱۹۳,<i class="zi"></i>۴<i class="zi"></i></span></div>
<div class="c bl n" style="left:904px;top:904px;width:52px;height:41px"><i class="z"></i></div>
<div class="c bl n" style="left:848px;top:904px;width:55px;height:41px"><i class="z"></i></div>
<div class="c yl n" style="left:771px;top:904px;width:76px;height:41px"><i class="z"></i></div>
<div class="c bl n" style="left:681px;top:904px;width:89px;height:41px"><i class="z"></i></div>
<div class="c yl n" style="left:625px;top:904px;width:55px;height:41px"><span class="ltr">۸,۸۳۵</span></div>
<div class="c yl n" style="left:568px;top:904px;width:56px;height:41px"><span class="ltr">۸,۸۳۵</span></div>
<div class="c yl n" style="left:489px;top:904px;width:78px;height:41px"><span class="ltr">۲۱,۸۴۹,۴۶۲</span></div>
<div class="c yl n" style="left:396px;top:904px;width:92px;height:41px"><span class="ltr">۱۹۳,<i class="zi"></i>۴<i class="zi"></i></span></div>
<div class="c bl n" style="left:338px;top:904px;width:57px;height:41px"><i class="z"></i></div>
<div class="c bl n" style="left:280px;top:904px;width:57px;height:41px"><i class="z"></i></div>
<div class="c yl n" style="left:203px;top:904px;width:76px;height:41px"><i class="z"></i></div>
<div class="c bl n" style="left:111px;top:904px;width:91px;height:41px"><i class="z"></i></div>
<div class="c bl st" style="left:36px;top:904px;width:74px;height:41px">تولید</div>
<div class="c gr nm" style="left:1778px;top:946px;width:106px;height:40px">سیمان جامبوبگ بلین<br>بالا</div>
<div class="c gr un" style="left:1730px;top:946px;width:47px;height:40px">تن</div>
<div class="c gr n" style="left:1668px;top:946px;width:61px;height:40px"><span class="ltr">۱۱</span></div>
<div class="c gr n" style="left:1611px;top:946px;width:56px;height:40px"><span class="ltr">۱۱</span></div>
<div class="c yl n" style="left:1532px;top:946px;width:78px;height:40px"><span class="ltr">۷۲,۷۲۷,۲۷۳</span></div>
<div class="c gr n" style="left:1439px;top:946px;width:92px;height:40px"><span class="ltr">۸<i class="zi"></i><i class="zi"></i></span></div>
<div class="c gr n" style="left:1390px;top:946px;width:48px;height:40px"><i class="z"></i></div>
<div class="c gr n" style="left:1337px;top:946px;width:52px;height:40px"><i class="z"></i></div>
<div class="c gr n" style="left:1248px;top:946px;width:88px;height:40px"><i class="z"></i></div>
<div class="c yl n" style="left:1187px;top:946px;width:60px;height:40px"><span class="ltr">۱۱</span></div>
<div class="c yl n" style="left:1129px;top:946px;width:57px;height:40px"><span class="ltr">۱۱</span></div>
<div class="c yl n" style="left:1050px;top:946px;width:78px;height:40px"><span class="ltr">۷۲,۷۲۷,۲۷۳</span></div>
<div class="c yl n" style="left:957px;top:946px;width:92px;height:40px"><span class="ltr">۸<i class="zi"></i><i class="zi"></i></span></div>
<div class="c gr n" style="left:904px;top:946px;width:52px;height:40px"><span class="ltr">۱۳</span></div>
<div class="c gr n" style="left:848px;top:946px;width:55px;height:40px"><span class="ltr">۱۳</span></div>
<div class="c yl n" style="left:771px;top:946px;width:76px;height:40px"><span class="ltr">۷۲,۱۵۳,۸۴۶</span></div>
<div class="c gr n" style="left:681px;top:946px;width:89px;height:40px"><span class="ltr">۹۳۸</span></div>
<div class="c yl n" style="left:625px;top:946px;width:55px;height:40px"><span class="ltr">۲۴</span></div>
<div class="c yl n" style="left:568px;top:946px;width:56px;height:40px"><span class="ltr">۲۴</span></div>
<div class="c yl n" style="left:489px;top:946px;width:78px;height:40px"><span class="ltr">۷۲,۴۱۶,۶۶۷</span></div>
<div class="c yl n" style="left:396px;top:946px;width:92px;height:40px"><span class="ltr">۱,۷۳۸</span></div>
<div class="c gr n" style="left:338px;top:946px;width:57px;height:40px"><i class="z"></i></div>
<div class="c gr n" style="left:280px;top:946px;width:57px;height:40px"><i class="z"></i></div>
<div class="c yl n" style="left:203px;top:946px;width:76px;height:40px"><i class="z"></i></div>
<div class="c gr n" style="left:111px;top:946px;width:91px;height:40px"><i class="z"></i></div>
<div class="c gr st" style="left:36px;top:946px;width:74px;height:40px">تولید</div>
<div class="c yl nm" style="left:1778px;top:987px;width:106px;height:23px">جمع فروش داخلی</div>
<div class="c yl un" style="left:1730px;top:987px;width:47px;height:23px"></div>
<div class="c yl n" style="left:1668px;top:987px;width:61px;height:23px"><span class="ltr">۱,۳۹۳,۶۳<i class="zi"></i></span></div>
<div class="c yl n" style="left:1611px;top:987px;width:56px;height:23px"><span class="ltr">۷<i class="zi"></i>۴,۸۸۹</span></div>
<div class="c yl n" style="left:1532px;top:987px;width:78px;height:23px"><span class="ltr"></span></div>
<div class="c yl n" style="left:1439px;top:987px;width:92px;height:23px"><span class="ltr">۱۴,۱۱<i class="zi"></i>,۱۵۱</span></div>
<div class="c yl n" style="left:1390px;top:987px;width:48px;height:23px"><i class="z"></i></div>
<div class="c yl n" style="left:1337px;top:987px;width:52px;height:23px"><i class="z"></i></div>
<div class="c yl n" style="left:1248px;top:987px;width:88px;height:23px"><i class="z"></i></div>
<div class="c yl n" style="left:1187px;top:987px;width:60px;height:23px"><span class="ltr">۱,۳۹۳,۶۳<i class="zi"></i></span></div>
<div class="c yl n" style="left:1129px;top:987px;width:57px;height:23px"><span class="ltr">۷<i class="zi"></i>۴,۸۸۹</span></div>
<div class="c yl n" style="left:1050px;top:987px;width:78px;height:23px"><span class="ltr"></span></div>
<div class="c yl n" style="left:957px;top:987px;width:92px;height:23px"><span class="ltr">۱۴,۱۱<i class="zi"></i>,۱۵۱</span></div>
<div class="c yl n" style="left:904px;top:987px;width:52px;height:23px"><span class="ltr">۲۲۱,۹۸۸</span></div>
<div class="c yl n" style="left:848px;top:987px;width:55px;height:23px"><span class="ltr">۹۳,۸۳۳</span></div>
<div class="c yl n" style="left:771px;top:987px;width:76px;height:23px"><span class="ltr"></span></div>
<div class="c yl n" style="left:681px;top:987px;width:89px;height:23px"><span class="ltr">۲,<i class="zi"></i>۷۹,۲۱۵</span></div>
<div class="c yl n" style="left:625px;top:987px;width:55px;height:23px"><span class="ltr">۱,۶۱۵,۶۱۸</span></div>
<div class="c yl n" style="left:568px;top:987px;width:56px;height:23px"><span class="ltr">۷۹۸,۷۲۲</span></div>
<div class="c yl n" style="left:489px;top:987px;width:78px;height:23px"><span class="ltr"></span></div>
<div class="c yl n" style="left:396px;top:987px;width:92px;height:23px"><span class="ltr">۱۶,۱۸۹,۳۶۶</span></div>
<div class="c yl n" style="left:338px;top:987px;width:57px;height:23px"><span class="ltr">۱,۹۳<i class="zi"></i>,<i class="zi"></i>۹۵</span></div>
<div class="c yl n" style="left:280px;top:987px;width:57px;height:23px"><span class="ltr">۱,<i class="zi"></i>۵<i class="zi"></i>,۸۱۱</span></div>
<div class="c yl n" style="left:203px;top:987px;width:76px;height:23px"><span class="ltr"></span></div>
<div class="c yl n" style="left:111px;top:987px;width:91px;height:23px"><span class="ltr">۸,۸<i class="zi"></i>۹,۸۳۱</span></div>
<div class="c yl st" style="left:36px;top:987px;width:74px;height:23px"></div>
<div class="c s nm" style="left:1778px;top:1011px;width:106px;height:23px"><b>فروش صادراتی:</b></div>
<div class="c s" style="left:1730px;top:1011px;width:47px;height:23px"></div>
<div class="c s" style="left:1668px;top:1011px;width:61px;height:23px"></div>
<div class="c s" style="left:1611px;top:1011px;width:56px;height:23px"></div>
<div class="c s" style="left:1532px;top:1011px;width:78px;height:23px"></div>
<div class="c s" style="left:1439px;top:1011px;width:92px;height:23px"></div>
<div class="c s" style="left:1390px;top:1011px;width:48px;height:23px"></div>
<div class="c s" style="left:1337px;top:1011px;width:52px;height:23px"></div>
<div class="c s" style="left:1248px;top:1011px;width:88px;height:23px"></div>
<div class="c s" style="left:1187px;top:1011px;width:60px;height:23px"></div>
<div class="c s" style="left:1129px;top:1011px;width:57px;height:23px"></div>
<div class="c s" style="left:1050px;top:1011px;width:78px;height:23px"></div>
<div class="c s" style="left:957px;top:1011px;width:92px;height:23px"></div>
<div class="c s" style="left:904px;top:1011px;width:52px;height:23px"></div>
<div class="c s" style="left:848px;top:1011px;width:55px;height:23px"></div>
<div class="c s" style="left:771px;top:1011px;width:76px;height:23px"></div>
<div class="c s" style="left:681px;top:1011px;width:89px;height:23px"></div>
<div class="c s" style="left:625px;top:1011px;width:55px;height:23px"></div>
<div class="c s" style="left:568px;top:1011px;width:56px;height:23px"></div>
<div class="c s" style="left:489px;top:1011px;width:78px;height:23px"></div>
<div class="c s" style="left:396px;top:1011px;width:92px;height:23px"></div>
<div class="c s" style="left:338px;top:1011px;width:57px;height:23px"></div>
<div class="c s" style="left:280px;top:1011px;width:57px;height:23px"></div>
<div class="c s" style="left:203px;top:1011px;width:76px;height:23px"></div>
<div class="c s" style="left:111px;top:1011px;width:91px;height:23px"></div>
<div class="c s" style="left:36px;top:1011px;width:74px;height:23px"></div>
<div class="c gr nm" style="left:1778px;top:1035px;width:106px;height:23px">کلینکر صادراتي</div>
<div class="c gr un" style="left:1730px;top:1035px;width:47px;height:23px">تن</div>
<div class="c gr n" style="left:1668px;top:1035px;width:61px;height:23px"><span class="ltr">۴۳۳</span></div>
<div class="c gr n" style="left:1611px;top:1035px;width:56px;height:23px"><span class="ltr">۴۳۳</span></div>
<div class="c yl n" style="left:1532px;top:1035px;width:78px;height:23px"><span class="ltr">۲۱,۱۳۳,۹۴۹</span></div>
<div class="c gr n" style="left:1439px;top:1035px;width:92px;height:23px"><span class="ltr">۹,۱۵۱</span></div>
<div class="c gr n" style="left:1390px;top:1035px;width:48px;height:23px"><i class="z"></i></div>
<div class="c gr n" style="left:1337px;top:1035px;width:52px;height:23px"><i class="z"></i></div>
<div class="c gr n" style="left:1248px;top:1035px;width:88px;height:23px"><i class="z"></i></div>
<div class="c yl n" style="left:1187px;top:1035px;width:60px;height:23px"><span class="ltr">۴۳۳</span></div>
<div class="c yl n" style="left:1129px;top:1035px;width:57px;height:23px"><span class="ltr">۴۳۳</span></div>
<div class="c yl n" style="left:1050px;top:1035px;width:78px;height:23px"><span class="ltr">۲۱,۱۳۳,۹۴۹</span></div>
<div class="c yl n" style="left:957px;top:1035px;width:92px;height:23px"><span class="ltr">۹,۱۵۱</span></div>
<div class="c gr n" style="left:904px;top:1035px;width:52px;height:23px"><i class="z"></i></div>
<div class="c gr n" style="left:848px;top:1035px;width:55px;height:23px"><i class="z"></i></div>
<div class="c yl n" style="left:771px;top:1035px;width:76px;height:23px"><i class="z"></i></div>
<div class="c gr n" style="left:681px;top:1035px;width:89px;height:23px"><i class="z"></i></div>
<div class="c yl n" style="left:625px;top:1035px;width:55px;height:23px"><span class="ltr">۴۳۳</span></div>
<div class="c yl n" style="left:568px;top:1035px;width:56px;height:23px"><span class="ltr">۴۳۳</span></div>
<div class="c yl n" style="left:489px;top:1035px;width:78px;height:23px"><span class="ltr">۲۱,۱۳۳,۹۴۹</span></div>
<div class="c yl n" style="left:396px;top:1035px;width:92px;height:23px"><span class="ltr">۹,۱۵۱</span></div>
<div class="c gr n" style="left:338px;top:1035px;width:57px;height:23px"><i class="z"></i></div>
<div class="c gr n" style="left:280px;top:1035px;width:57px;height:23px"><i class="z"></i></div>
<div class="c yl n" style="left:203px;top:1035px;width:76px;height:23px"><i class="z"></i></div>
<div class="c gr n" style="left:111px;top:1035px;width:91px;height:23px"><i class="z"></i></div>
<div class="c gr st" style="left:36px;top:1035px;width:74px;height:23px">تولید</div>
<div class="c bl nm" style="left:1778px;top:1059px;width:106px;height:23px">سیمان پاکتي</div>
<div class="c bl un" style="left:1730px;top:1059px;width:47px;height:23px">تن</div>
<div class="c bl n" style="left:1668px;top:1059px;width:61px;height:23px"><span class="ltr">۲<i class="zi"></i>۱,۱۱۷</span></div>
<div class="c bl n" style="left:1611px;top:1059px;width:56px;height:23px"><span class="ltr">۲<i class="zi"></i>۱,۱۱۷</span></div>
<div class="c yl n" style="left:1532px;top:1059px;width:78px;height:23px"><span class="ltr">۲۶,۶۵۳,۴<i class="zi"></i>۶</span></div>
<div class="c bl n" style="left:1439px;top:1059px;width:92px;height:23px"><span class="ltr">۵,۳۶<i class="zi"></i>,۴۵۳</span></div>
<div class="c bl n" style="left:1390px;top:1059px;width:48px;height:23px"><span class="neg ltr">(۴,۵۵۱)</span></div>
<div class="c bl n" style="left:1337px;top:1059px;width:52px;height:23px"><span class="neg ltr">(۴,۵۵۱)</span></div>
<div class="c bl n" style="left:1248px;top:1059px;width:88px;height:23px"><span class="neg ltr">(۱<i class="zi"></i>۶,۴۸۳)</span></div>
<div class="c yl n" style="left:1187px;top:1059px;width:60px;height:23px"><span class="ltr">۱۹۶,۵۶۶</span></div>
<div class="c yl n" style="left:1129px;top:1059px;width:57px;height:23px"><span class="ltr">۱۹۶,۵۶۶</span></div>
<div class="c yl n" style="left:1050px;top:1059px;width:78px;height:23px"><span class="ltr">۲۶,۷۲۸,۷۸۳</span></div>
<div class="c yl n" style="left:957px;top:1059px;width:92px;height:23px"><span class="ltr">۵,۲۵۳,۹۷<i class="zi"></i></span></div>
<div class="c bl n" style="left:904px;top:1059px;width:52px;height:23px"><span class="ltr">۱۷,۵۷<i class="zi"></i></span></div>
<div class="c bl n" style="left:848px;top:1059px;width:55px;height:23px"><span class="ltr">۱۷,۵۷<i class="zi"></i></span></div>
<div class="c yl n" style="left:771px;top:1059px;width:76px;height:23px"><span class="ltr">۲۹,۹۱۱,۴۴<i class="zi"></i></span></div>
<div class="c bl n" style="left:681px;top:1059px;width:89px;height:23px"><span class="ltr">۵۲۵,۵۴۴</span></div>
<div class="c yl n" style="left:625px;top:1059px;width:55px;height:23px"><span class="ltr">۲۱۴,۱۳۶</span></div>
<div class="c yl n" style="left:568px;top:1059px;width:56px;height:23px"><span class="ltr">۲۱۴,۱۳۶</span></div>
<div class="c yl n" style="left:489px;top:1059px;width:78px;height:23px"><span class="ltr">۲۶,۹۸۹,۹۲۲</span></div>
<div class="c yl n" style="left:396px;top:1059px;width:92px;height:23px"><span class="ltr">۵,۷۷۹,۵۱۴</span></div>
<div class="c bl n" style="left:338px;top:1059px;width:57px;height:23px"><span class="ltr">۱۳۴,<i class="zi"></i>۲۲</span></div>
<div class="c bl n" style="left:280px;top:1059px;width:57px;height:23px"><span class="ltr">۱۳۴,<i class="zi"></i>۲۲</span></div>
<div class="c yl n" style="left:203px;top:1059px;width:76px;height:23px"><span class="ltr">۱۶,۹۳۴,۳۷۶</span></div>
<div class="c bl n" style="left:111px;top:1059px;width:91px;height:23px"><span class="ltr">۲,۲۶۹,۵۷۹</span></div>
<div class="c bl st" style="left:36px;top:1059px;width:74px;height:23px">تولید</div>
<svg class="a" style="left:0;top:0;pointer-events:none" width="1920" height="1080" viewBox="0 0 1920 1080">
<g opacity="0.08" fill="#555">
<text x="0" y="0" transform="translate(765 776) rotate(-47.5)" font-family="Liberation Sans" font-weight="bold" font-size="100" textLength="590" lengthAdjust="spacing">@codal.ir</text>
</g>
<path d="M961 512 Q990 495 1012 487 Q1035 474 1055 476 Q1080 480 1096 497 Q1108 505 1120 516 Q1105 512 1096 510 L1090 520 Q1084 528 1078 529 Q1072 522 1068 515 Q1062 528 1056 538 Q1050 525 1046 508 Q1030 500 1012 498 Q990 502 961 512 Z" fill="#a07838" opacity="0.25"/>
<text x="1037" y="557" font-family="Liberation Sans" font-size="56" font-weight="bold" fill="#666" opacity="0.22" direction="rtl" textLength="238" lengthAdjust="spacingAndGlyphs">نبض بورس</text>
<text x="834" y="603" font-family="Liberation Sans" font-size="28" fill="#666" opacity="0.2" textLength="258" lengthAdjust="spacingAndGlyphs">nabzebourse.com</text>
</svg>

</body></html>
